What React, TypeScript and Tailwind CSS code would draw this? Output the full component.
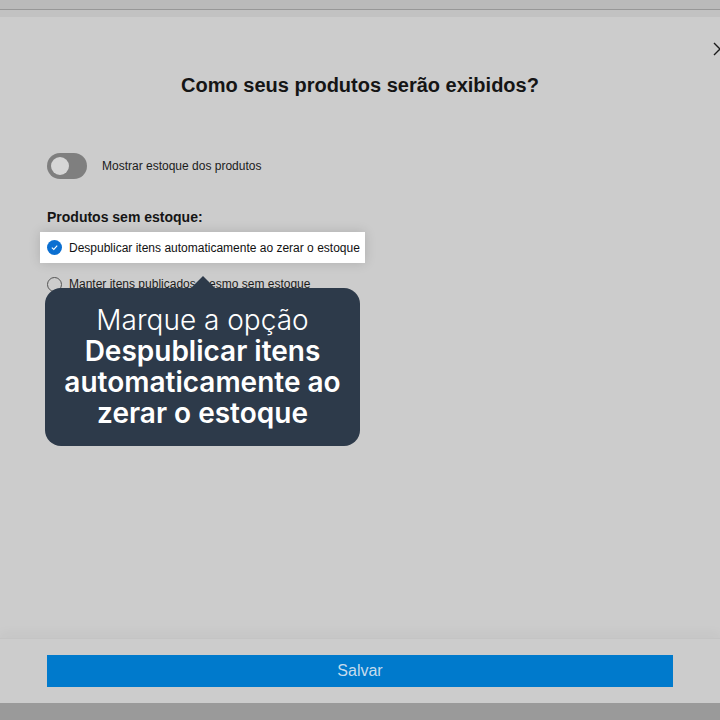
import React from "react";

// ---------- Tela ----------
export default function App() {
  return (
    <div
      className="w-[720px] h-[720px] flex flex-col bg-[#9a9a9a] overflow-hidden"
      style={{ fontFamily: '"Liberation Sans", Arial, sans-serif' }}
    >
      {/* faixa superior */}
      <div className="h-[10px] bg-[#bababa] border-b border-[#979797]" />
      <div className="h-[7px] bg-[#c2c2c2]" />

      {/* modal */}
      <div className="relative h-[686px] flex flex-col bg-[#cccccc]">
        {/* botão fechar, cortado na borda */}
        <svg className="absolute left-[713px] top-[25px]" width="14" height="14" viewBox="0 0 14 14" fill="none">
          <path d="M1 1 L13 13 M13 1 L1 13" stroke="#1a1a1a" strokeWidth="1.4" />
        </svg>

        <div className="flex-1 flex flex-col px-[47px]">
          <h1 className="mt-[55px] text-center text-[20px] font-bold text-[#151515] leading-[26px]">
            Como seus produtos serão exibidos?
          </h1>

          {/* toggle */}
          <div className="mt-[55px] flex items-center gap-[15px]">
            <div className="w-[40px] h-[26px] rounded-full bg-[#7f7f7f] flex items-center px-[4px]">
              <div className="w-[18px] h-[18px] rounded-full bg-[#d6d6d6]" />
            </div>
            <span className="text-[12px] text-[#1b1b1b]">Mostrar estoque dos produtos</span>
          </div>

          <div className="mt-[29px] text-[14px] font-bold text-[#151515] leading-[18px]">
            Produtos sem estoque:
          </div>

          {/* opção destacada */}
          <div className="relative z-10 mt-[6px] -ml-[7px] w-[325px] h-[31px] bg-white flex items-center gap-[7px] pl-[7px] shadow-[0_0_12px_rgba(0,0,0,0.15)]">
            <div className="w-[15px] h-[15px] rounded-full bg-[#0b6fd1] flex items-center justify-center">
              <svg width="9" height="9" viewBox="0 0 10 10" fill="none">
                <path d="M2 5.2 L4.2 7.2 L8 3" stroke="white" strokeWidth="1.2" />
              </svg>
            </div>
            <span className="text-[12px] text-[#111]">Despublicar itens automaticamente ao zerar o estoque</span>
          </div>

          <div className="mt-[12px] flex items-center gap-[7px]">
            <div className="w-[15px] h-[15px] rounded-full border border-[#555] bg-[#cccccc]" />
            <span className="text-[12px] text-[#1b1b1b]">Manter itens publicados mesmo sem estoque</span>
          </div>

          {/* balão */}
          <div
            className="relative z-20 -mt-[5px] -ml-[2px] w-[315px] h-[158px] rounded-[16px] bg-[#2d3a4a] flex flex-col items-center justify-center text-white text-[28px] leading-[31px] text-center"
            style={{ fontFamily: "Inter, sans-serif" }}
          >
            <div className="absolute -top-[12px] left-[145px] w-0 h-0 border-l-[13px] border-r-[13px] border-b-[13px] border-l-transparent border-r-transparent border-b-[#2d3a4a]" />
            <div className="font-light">Marque a opção</div>
            <div className="font-semibold">Despublicar itens</div>
            <div className="font-semibold">automaticamente ao</div>
            <div className="font-semibold">zerar o estoque</div>
          </div>
        </div>

        {/* rodapé */}
        <div className="h-[65px] border-t border-[#c4c4c4] shadow-[0_-6px_10px_rgba(0,0,0,0.03)] px-[47px] pt-[16px]">
          <button className="w-full h-[32px] bg-[#007acc] text-[#c6dced] text-[16px]">Salvar</button>
        </div>
      </div>
    </div>
  );
}
